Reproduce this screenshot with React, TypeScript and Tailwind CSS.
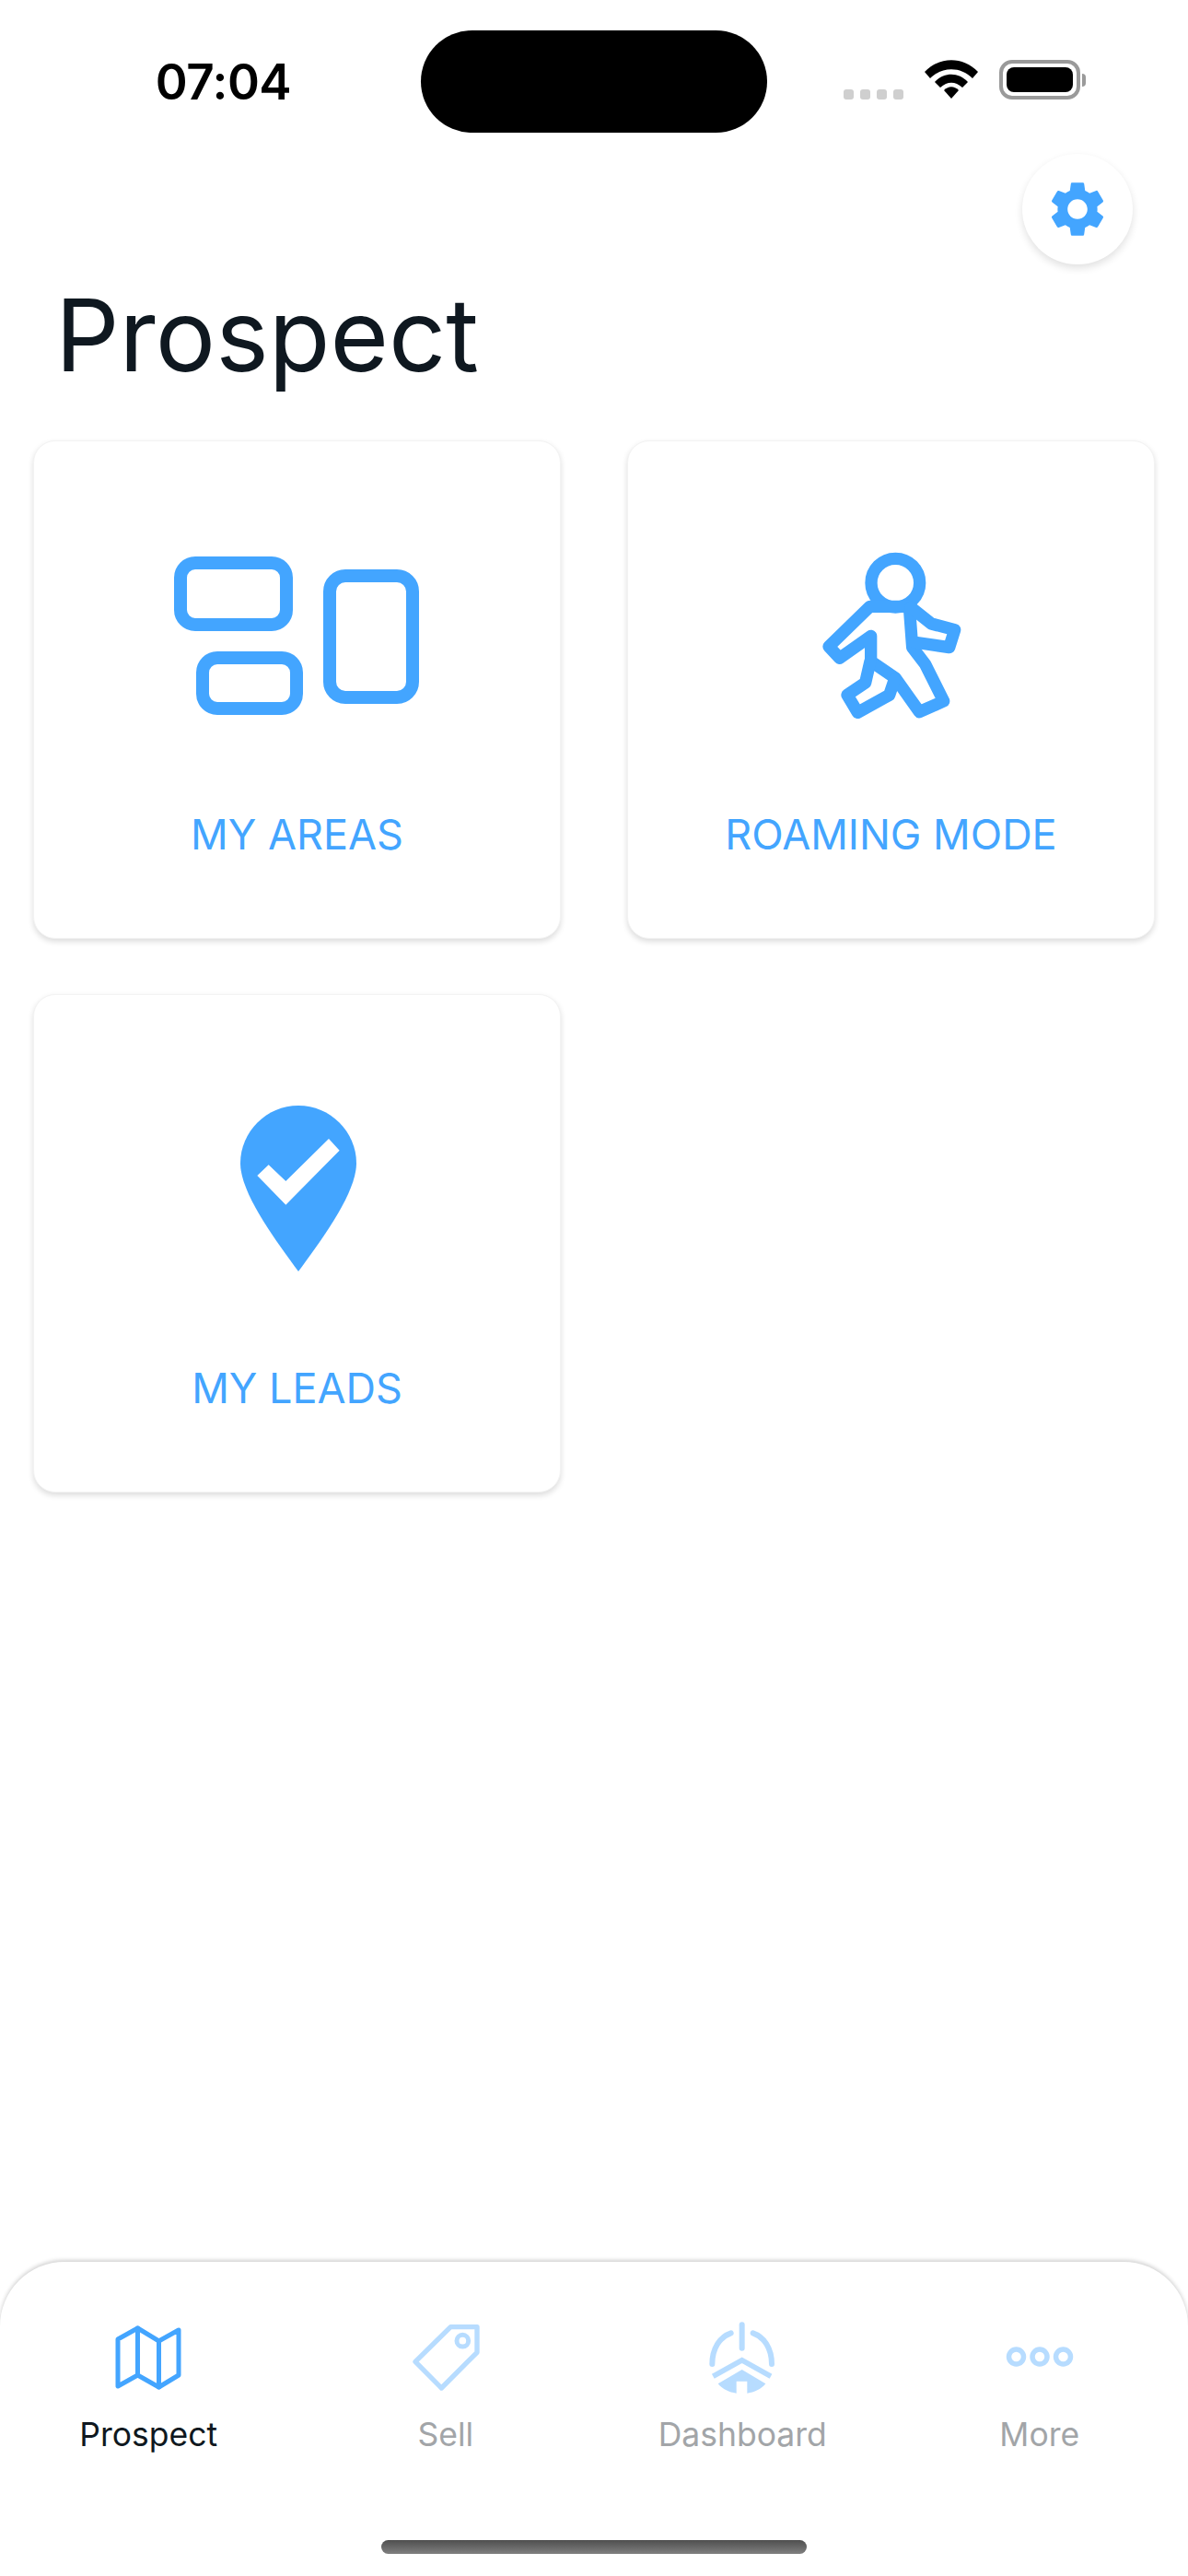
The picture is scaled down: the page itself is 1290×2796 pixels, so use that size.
import { MdSettings } from "react-icons/md";

const BLUE = "#43a5ff";
const PALE = "#b7dcff";

function AreasIcon() {
  return (
    <svg width="340" height="230" viewBox="3 1 340 230" fill="none" stroke={BLUE} strokeWidth="14">
      <rect x="46" y="40" width="115" height="67" rx="16" />
      <rect x="208" y="54" width="90" height="132" rx="17" />
      <rect x="70" y="143" width="102" height="55" rx="16" />
    </svg>
  );
}

function WalkerIcon() {
  return (
    <svg width="200" height="210" viewBox="22 33 600 630" fill="none" stroke={BLUE} strokeWidth="40" strokeLinejoin="round" strokeLinecap="round">
      <circle cx="335" cy="155" r="79" />
      <path d="M252 232 L118 362 L153 400 L255 328 L255 410 L335 465 L413 575 L492 540 L432 420 L390 365 L380 232 Z" />
      <path d="M385 235 L452 288 L528 308 L510 365 L395 348" />
      <path d="M253 410 L237 480 L178 520 L212 577 L315 520 L332 470" />
    </svg>
  );
}

function LeadPinIcon() {
  return (
    <svg width="180" height="210" viewBox="6 36 540 630">
      <path fill={BLUE} d="M279 57 C175 57 90 142 90 245 C90 340 200 490 279 597 C358 490 468 340 468 245 C468 142 383 57 279 57 Z" />
      <path fill="#fff" d="M378 165 L413 203 L238 380 L145 285 L182 250 L238 303 Z" />
    </svg>
  );
}

function MapIcon() {
  return (
    <svg width="84" height="84" viewBox="0 0 84 84" fill="none" stroke={BLUE} strokeWidth="5" strokeLinejoin="round" strokeLinecap="round">
      <path d="M9 23 L30.5 11 L53.5 25 L75 13 L75 62 L53.5 75 L30.5 62 L9 74 Z" />
      <path d="M30.5 11 L30.5 62 M53.5 25 L53.5 75" />
    </svg>
  );
}

function TagIcon() {
  return (
    <svg width="120" height="110" viewBox="11 -21 360 330" fill="none" stroke={PALE}>
      <path strokeWidth="16" strokeLinejoin="round" d="M92 160 L207 47 L293 47 L293 130 L177 246 Z" />
      <circle cx="246" cy="92" r="19" strokeWidth="15" />
    </svg>
  );
}

function DashboardIcon() {
  return (
    <svg width="150" height="110" viewBox="4 -21 450 330" fill="none">
      <g stroke={PALE} strokeWidth="18" strokeLinecap="round">
        <path d="M228 40 L228 116" />
        <path d="M192 67 C155 80 131 118 131 168" />
        <path d="M264 67 C301 80 325 118 325 168" />
      </g>
      <path stroke={PALE} strokeWidth="17" d="M134 208 L228 155 L322 208" />
      <path fill={PALE} d="M150 232 L228 186 L305 232 C290 250 268 260 245 263 L245 224 L210 224 L210 263 C187 260 165 250 150 232 Z" />
    </svg>
  );
}

function MoreIcon() {
  return (
    <svg width="84" height="30" viewBox="0 0 84 30" fill="none" stroke={PALE} strokeWidth="5.5">
      <circle cx="16.5" cy="15" r="8" />
      <circle cx="42" cy="15" r="8" />
      <circle cx="67.5" cy="15" r="8" />
    </svg>
  );
}

function SignalDots() {
  return (
    <div className="flex gap-[7px] self-end">
      <span className="h-[11px] w-[11px] rounded-[3px] bg-[#cfcfcf]" />
      <span className="h-[11px] w-[11px] rounded-[3px] bg-[#cfcfcf]" />
      <span className="h-[11px] w-[11px] rounded-[3px] bg-[#cfcfcf]" />
      <span className="h-[11px] w-[11px] rounded-[3px] bg-[#cfcfcf]" />
    </div>
  );
}

function WifiIcon() {
  return (
    <svg width="58" height="42" viewBox="0 0 58 42" fill="#000">
      <path d="M0 13 C16 -4 42 -4 58 13 L52 20 C39 7 19 7 6 20 Z" />
      <path d="M11 24 C21 13 37 13 47 24 L41 30 C33 23 25 23 17 30 Z" />
      <path d="M21 33 C26 28 32 28 37 33 L29 42 Z" />
    </svg>
  );
}

function Battery() {
  return (
    <div className="flex items-center gap-[2px]">
      <div className="flex h-[43px] w-[88px] rounded-[14px] border-[4px] border-[#9a9a9a] p-[4px]">
        <div className="flex-1 rounded-[8px] bg-black" />
      </div>
      <div className="h-[14px] w-[4px] rounded-r-full bg-[#9a9a9a]" />
    </div>
  );
}

function StatusBar() {
  return (
    <header className="flex h-[167px] shrink-0 items-start">
      <div className="flex w-[457px] justify-center pt-[58px] pl-[28px]">
        <span className="text-[53px] leading-[62px] font-semibold tracking-[-0.5px] text-black">07:04</span>
      </div>
      <div className="mt-[33px] h-[111px] w-[376px] rounded-full bg-black" />
      <div className="mt-[65px] ml-[83px] flex h-[43px] items-start gap-[23px]">
        <SignalDots />
        <WifiIcon />
        <Battery />
      </div>
    </header>
  );
}

function FeatureCard({ label, icon }: { label: string; icon: React.ReactNode }) {
  return (
    <div className="flex h-[541px] flex-col items-center rounded-[24px] border border-[#f3f3f3] bg-white shadow-[0_3px_6px_rgba(0,0,0,0.14)]">
      <div className="flex h-[323px] items-end justify-center">{icon}</div>
      <span className="mt-[76px] text-[45px] leading-[56px] text-[#43a5ff]">{label}</span>
    </div>
  );
}

function TabItem({ label, icon, active }: { label: string; icon: React.ReactNode; active?: boolean }) {
  return (
    <div className="flex flex-col items-center">
      <div className="flex h-[80px] items-center justify-center">{icon}</div>
      <span className={active ? "mt-[23px] text-[35.5px] leading-[44px] text-[#0f1820]" : "mt-[23px] text-[35.5px] leading-[44px] text-[#a2a5a8]"}>
        {label}
      </span>
    </div>
  );
}

export default function App() {
  return (
    <div className="flex h-[2796px] w-[1290px] flex-col overflow-hidden bg-white font-['Inter',sans-serif]">
      <StatusBar />

      <main className="flex-1">
        <div className="flex justify-end pr-[60px]">
          <button className="flex h-[120px] w-[120px] items-center justify-center rounded-full bg-white shadow-[0_4px_8px_rgba(0,0,0,0.12)]">
            <MdSettings size={72} color={BLUE} />
          </button>
        </div>
        <h1 className="mt-[12px] mb-[51px] pl-[60px] text-[109px] leading-[128px] font-normal text-[#0f1820]">Prospect</h1>

        <div className="grid grid-cols-2 gap-x-[72px] gap-y-[60px] px-[36px]">
          <FeatureCard label="MY AREAS" icon={<AreasIcon />} />
          <FeatureCard label="ROAMING MODE" icon={<WalkerIcon />} />
          <FeatureCard label="MY LEADS" icon={<LeadPinIcon />} />
        </div>
      </main>

      {/* bottom tabs */}
      <footer className="relative h-[341px] shrink-0 rounded-t-[70px] bg-white pt-[63px] shadow-[0_-2px_4px_rgba(0,0,0,0.18)]">
        <nav className="grid grid-cols-4">
          <TabItem label="Prospect" icon={<MapIcon />} active />
          <TabItem label="Sell" icon={<TagIcon />} />
          <TabItem label="Dashboard" icon={<DashboardIcon />} />
          <TabItem label="More" icon={<MoreIcon />} />
        </nav>
        <div className="absolute bottom-[24px] left-[414px] h-[15px] w-[462px] rounded-full bg-gradient-to-b from-[#4f4f4f] to-[#808080]" />
      </footer>
    </div>
  );
}
